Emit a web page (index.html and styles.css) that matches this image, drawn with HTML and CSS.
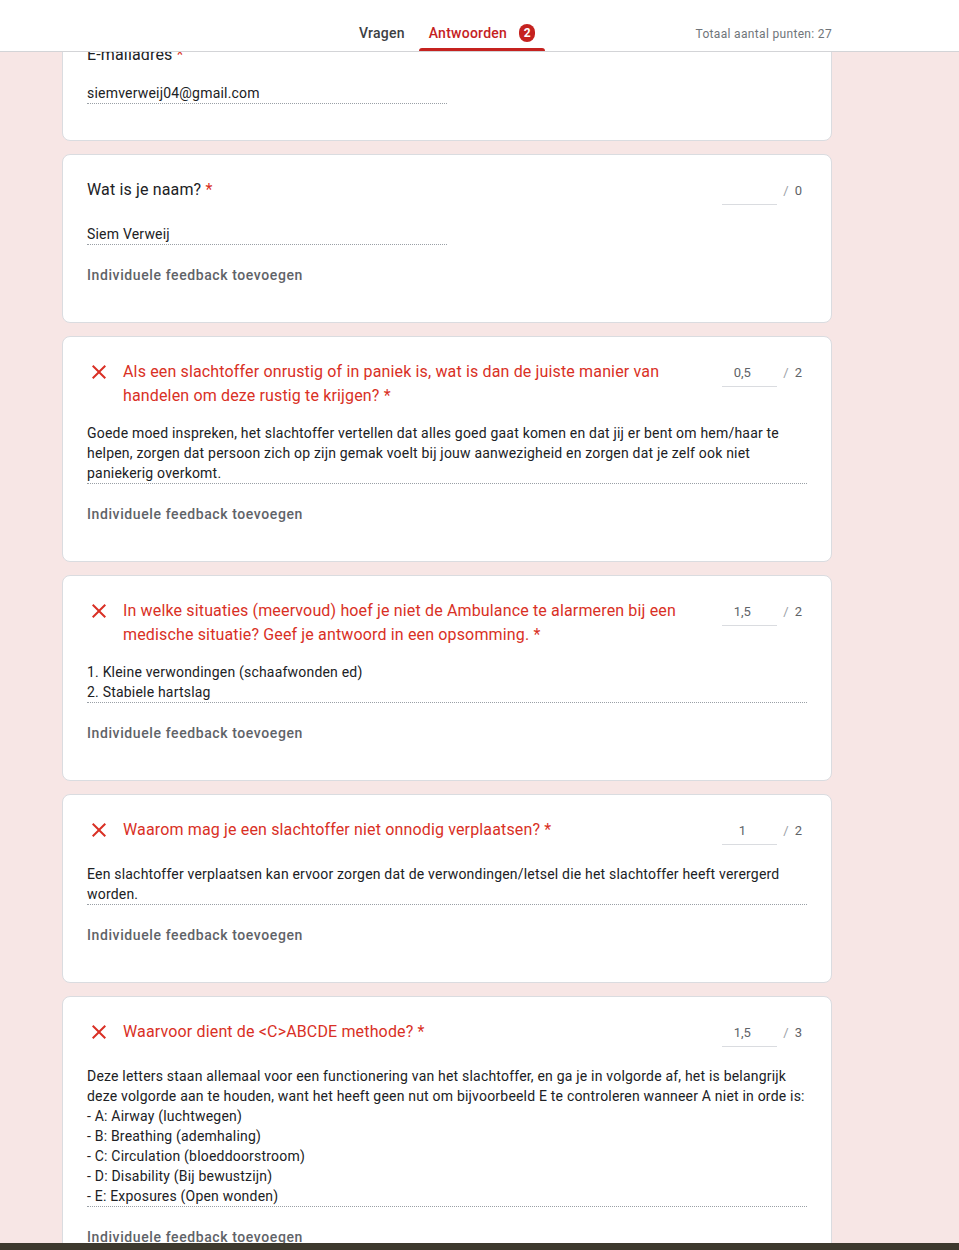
FILE: index.html
```html
<!DOCTYPE html>
<html lang="nl">
<head>
  <meta charset="UTF-8">
  <title>Antwoorden</title>
  <link rel="stylesheet" href="styles.css">
</head>
<body>

  <header class="topbar">
    <div class="topbar-inner">
      <nav class="tabs">
        <a class="tab">Vragen</a>
        <a class="tab active">Antwoorden <span class="badge">2</span></a>
      </nav>
      <div class="total">Totaal aantal punten: 27</div>
    </div>
  </header>

  <main class="form">

    <section class="card card-email">
      <div class="title">E-mailadres <span class="req">*</span></div>
      <div class="answer short">siemverweij04@gmail.com</div>
    </section>

    <section class="card">
      <div class="head">
        <div class="title">Wat is je naam? <span class="req">*</span></div>
        <div class="points"><span class="score"></span><span class="slash">/</span><span class="max">0</span></div>
      </div>
      <div class="answer short">Siem Verweij</div>
      <div class="feedback">Individuele feedback toevoegen</div>
    </section>

    <section class="card wrong">
      <div class="head">
        <svg class="x-icon" viewBox="0 0 24 24"><path d="M19 6.41L17.59 5 12 10.59 6.41 5 5 6.41 10.59 12 5 17.59 6.41 19 12 13.41 17.59 19 19 17.59 13.41 12z"/></svg>
        <div class="title">Als een slachtoffer onrustig of in paniek is, wat is dan de juiste manier van handelen om deze rustig te krijgen? *</div>
        <div class="points"><span class="score">0,5</span><span class="slash">/</span><span class="max">2</span></div>
      </div>
      <div class="answer">Goede moed inspreken, het slachtoffer vertellen dat alles goed gaat komen en dat jij er bent om hem/haar te helpen, zorgen dat persoon zich op zijn gemak voelt bij jouw aanwezigheid en zorgen dat je zelf ook niet paniekerig overkomt.</div>
      <div class="feedback">Individuele feedback toevoegen</div>
    </section>

    <section class="card wrong">
      <div class="head">
        <svg class="x-icon" viewBox="0 0 24 24"><path d="M19 6.41L17.59 5 12 10.59 6.41 5 5 6.41 10.59 12 5 17.59 6.41 19 12 13.41 17.59 19 19 17.59 13.41 12z"/></svg>
        <div class="title">In welke situaties (meervoud) hoef je niet de Ambulance te alarmeren bij een medische situatie? Geef je antwoord in een opsomming. *</div>
        <div class="points"><span class="score">1,5</span><span class="slash">/</span><span class="max">2</span></div>
      </div>
      <div class="answer">1. Kleine verwondingen (schaafwonden ed)<br>2. Stabiele hartslag</div>
      <div class="feedback">Individuele feedback toevoegen</div>
    </section>

    <section class="card wrong">
      <div class="head">
        <svg class="x-icon" viewBox="0 0 24 24"><path d="M19 6.41L17.59 5 12 10.59 6.41 5 5 6.41 10.59 12 5 17.59 6.41 19 12 13.41 17.59 19 19 17.59 13.41 12z"/></svg>
        <div class="title">Waarom mag je een slachtoffer niet onnodig verplaatsen? *</div>
        <div class="points"><span class="score">1</span><span class="slash">/</span><span class="max">2</span></div>
      </div>
      <div class="answer">Een slachtoffer verplaatsen kan ervoor zorgen dat de verwondingen/letsel die het slachtoffer heeft verergerd worden.</div>
      <div class="feedback">Individuele feedback toevoegen</div>
    </section>

    <section class="card wrong">
      <div class="head">
        <svg class="x-icon" viewBox="0 0 24 24"><path d="M19 6.41L17.59 5 12 10.59 6.41 5 5 6.41 10.59 12 5 17.59 6.41 19 12 13.41 17.59 19 19 17.59 13.41 12z"/></svg>
        <div class="title">Waarvoor dient de &lt;C&gt;ABCDE methode? *</div>
        <div class="points"><span class="score">1,5</span><span class="slash">/</span><span class="max">3</span></div>
      </div>
      <div class="answer">Deze letters staan allemaal voor een functionering van het slachtoffer, en ga je in volgorde af, het is belangrijk deze volgorde aan te houden, want het heeft geen nut om bijvoorbeeld E te controleren wanneer A niet in orde is:<br>- A: Airway (luchtwegen)<br>- B: Breathing (ademhaling)<br>- C: Circulation (bloeddoorstroom)<br>- D: Disability (Bij bewustzijn)<br>- E: Exposures (Open wonden)</div>
      <div class="feedback">Individuele feedback toevoegen</div>
    </section>

  </main>

  <div class="taskbar"></div>

</body>
</html>
```

FILE: styles.css
```css
body {
  margin: 0;
  background: #f7e6e5;
  font-family: Roboto, 'Liberation Sans', sans-serif;
  color: #202124;
}

/* top bar with tabs */
.topbar {
  position: fixed;
  top: 0;
  left: 0;
  right: 0;
  height: 51px;
  background: #fff;
  border-bottom: 1px solid #d3d4d7;
  z-index: 10;
}

.topbar-inner {
  width: 770px;
  margin-left: 62px;
  height: 100%;
  display: flex;
  justify-content: center;
  position: relative;
}

.tabs {
  display: flex;
  gap: 4px;
  height: 100%;
}

.tab {
  display: flex;
  align-items: center;
  padding: 14px 10px 0;
  font-size: 14px;
  font-weight: 500;
  letter-spacing: 0.25px;
  color: #3c4043;
  position: relative;
}

.tab.active {
  color: #c5221f;
}

.tab.active::after {
  content: "";
  position: absolute;
  left: 0;
  right: 0;
  bottom: 0;
  height: 3px;
  border-radius: 3px 3px 0 0;
  background: #c5221f;
}

.badge {
  display: inline-flex;
  align-items: center;
  justify-content: center;
  width: 16px;
  height: 18px;
  margin-left: 12px;
  border-radius: 8px;
  background: #c5221f;
  color: #fff;
  font-size: 12px;
  font-weight: 700;
  letter-spacing: 0;
}

.total {
  position: absolute;
  right: 0;
  top: 27px;
  font-size: 12px;
  letter-spacing: 0.33px;
  color: #70757a;
}

/* cards */
.form {
  width: 770px;
  margin-left: 62px;
  padding-top: 18px;
  display: flex;
  flex-direction: column;
  gap: 13px;
}

.card {
  background: #fff;
  border: 1px solid #dadce0;
  border-radius: 8px;
  padding: 23px 24px 37px;
}

.card-email {
  padding-top: 24px;
  padding-bottom: 36px;
}

.card-email .title {
  margin-bottom: 16px;
}

.head {
  display: flex;
  align-items: flex-start;
  min-height: 31px;
  margin-bottom: 15px;
}

.title {
  flex: 1;
  font-size: 16px;
  line-height: 24px;
  letter-spacing: 0.15px;
  color: #202124;
  padding-right: 16px;
}

.req {
  color: #d93025;
}

.wrong .title {
  color: #d93025;
}

.x-icon {
  width: 24px;
  height: 24px;
  flex: none;
  margin-right: 12px;
  fill: #d93025;
}

.points {
  flex: none;
  display: flex;
  align-items: flex-start;
  padding-right: 5px;
  font-size: 13px;
  line-height: 18px;
  color: #5f6368;
}

.score {
  width: 40px;
  height: 22px;
  padding: 4px 15px 0 0;
  text-align: center;
  border-bottom: 1px solid #dadce0;
}

.slash {
  margin: 4px 0 0 6px;
  color: #9aa0a6;
}

.max {
  margin: 4px 0 0 6px;
}

.answer {
  font-size: 14px;
  line-height: 20px;
  letter-spacing: 0.2px;
  color: #202124;
  border-bottom: 1px dotted #9aa0a6;
}

.answer.short {
  width: 360px;
}

.feedback {
  margin-top: 20px;
  font-size: 14px;
  line-height: 20px;
  font-weight: 500;
  letter-spacing: 0.6px;
  color: #5f6368;
}

.taskbar {
  position: fixed;
  left: 0;
  right: 0;
  bottom: 0;
  height: 7px;
  background: #3d392e;
  z-index: 20;
}
```
